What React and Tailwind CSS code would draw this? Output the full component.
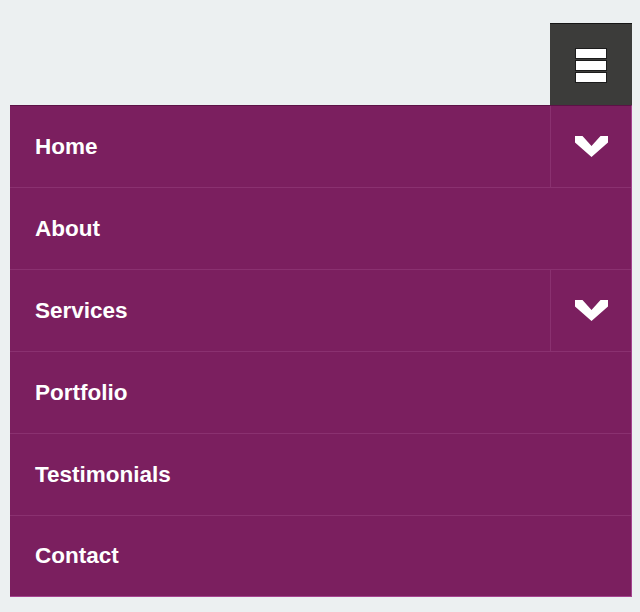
import React, { useState } from "react";

const items = [
  { label: "Home", sub: true },
  { label: "About" },
  { label: "Services", sub: true },
  { label: "Portfolio" },
  { label: "Testimonials" },
  { label: "Contact" },
];

function Chevron() {
  return (
    <svg width="33" height="21" viewBox="0 0 33 21">
      <polygon
        points="0,0 7.5,0 16.5,10 25.5,0 33,0 33,6.5 16.5,21 0,6.5"
        fill="#ffffff"
      />
    </svg>
  );
}

export default function App() {
  const [open, setOpen] = useState(true);

  return (
    <div
      className="min-h-[612px] bg-[#ecf0f1] pt-[23px] pl-[10px] pr-[8px]"
      style={{ fontFamily: '"Liberation Sans", Arial, sans-serif' }}
    >
      {/* toggle */}
      <div className="flex justify-end">
        <button
          onClick={() => setOpen(!open)}
          className="w-[82px] h-[82px] bg-[#3c3c3a] border-t border-[#161616] flex flex-col items-center justify-center gap-[1px] pt-[1px]"
        >
          <span className="block w-[32px] h-[11px] bg-white border border-[#1c1c1c]" />
          <span className="block w-[32px] h-[11px] bg-white border border-[#1c1c1c]" />
          <span className="block w-[32px] h-[11px] bg-white border border-[#1c1c1c]" />
        </button>
      </div>

      {open && (
        <ul className="bg-[#7b1f5f] border-t border-[#5c1246] border-r border-b border-r-[#a54490] border-b-[#a54490]">
          {items.map((item, i) => (
            <li
              key={item.label}
              className={`flex ${i < items.length - 1 ? "h-[82px] border-b border-[#8a3170]" : "h-[80px]"}`}
            >
              <a className="flex-1 flex items-center pl-[25px] text-white font-bold text-[22.5px]">
                {item.label}
              </a>
              {item.sub && (
                <span className="w-[81px] border-l border-[#8a3170] flex items-center justify-center">
                  <Chevron />
                </span>
              )}
            </li>
          ))}
        </ul>
      )}
    </div>
  );
}
